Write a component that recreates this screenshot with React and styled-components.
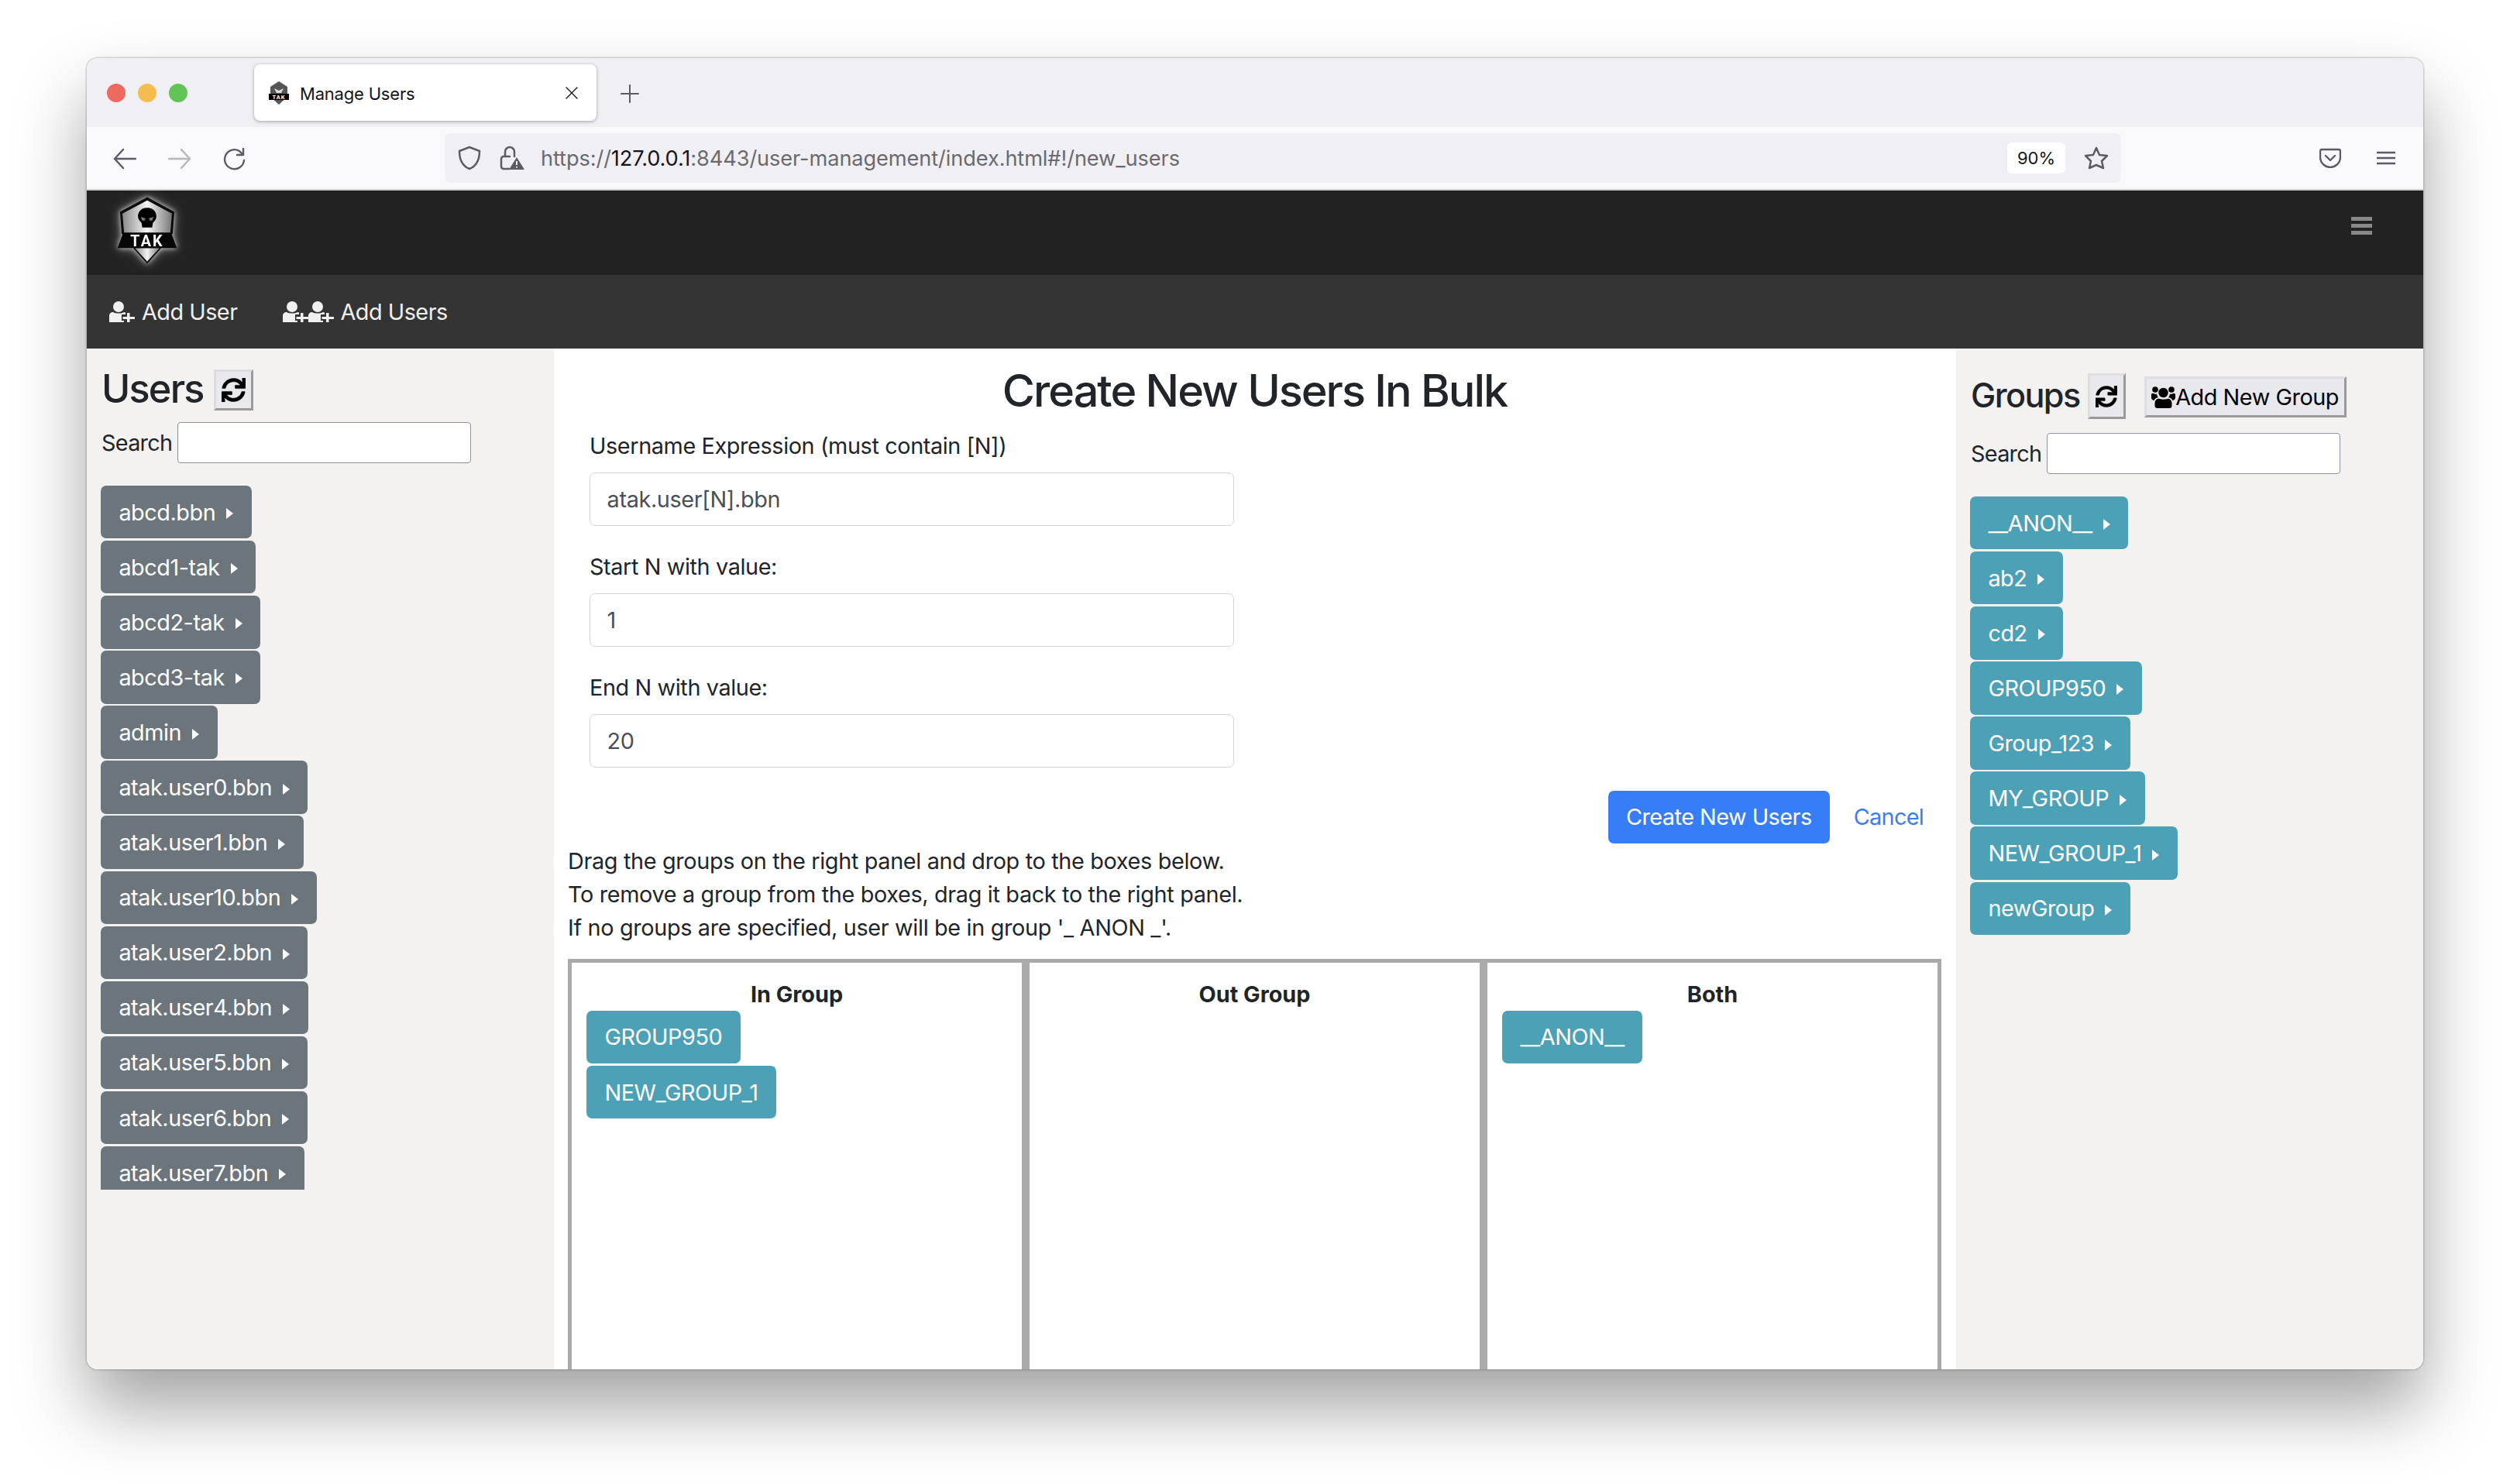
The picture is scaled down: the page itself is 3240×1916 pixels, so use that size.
import React from "react";
import styled, { createGlobalStyle } from "styled-components";
import { FaSync } from "react-icons/fa";

const users = [
	"abcd.bbn", "abcd1-tak", "abcd2-tak", "abcd3-tak", "admin", "atak.user0.bbn", "atak.user1.bbn",
	"atak.user10.bbn", "atak.user2.bbn", "atak.user4.bbn", "atak.user5.bbn", "atak.user6.bbn", "atak.user7.bbn",
];
const groups = ["__ANON__", "ab2", "cd2", "GROUP950", "Group_123", "MY_GROUP", "NEW_GROUP_1", "newGroup"];
const fontStack = `Inter, "Liberation Sans", sans-serif`;

const GlobalStyle = createGlobalStyle`
  html, body { margin: 0; padding: 0; background: #fff; }
  body { width: 3240px; height: 1916px; overflow: hidden; font-family: ${fontStack}; color: #212529; }
  * { box-sizing: border-box; }
`;

const Page = styled.div`
  padding: 75px 112px 0;
  height: 1916px;
  overflow: hidden;
  background: #fff;
`;
const Window = styled.div`
  height: 1693px;
  border-radius: 14px;
  overflow: hidden;
  display: flex;
  flex-direction: column;
  background: #f3f2f1;
  box-shadow: 0 50px 90px rgba(0, 0, 0, 0.36), 0 0 3px rgba(0, 0, 0, 0.45);
`;
const TabStrip = styled.div`
  height: 89px;
  flex: none;
  background: #f0f0f4;
  display: flex;
  align-items: flex-start;
  padding-left: 26px;
`;
const Lights = styled.div`
  display: flex;
  gap: 16px;
  margin-top: 33px;
  width: 190px;
`;
const Light = styled.span`
  width: 24px;
  height: 24px;
  border-radius: 50%;
  background: ${(p) => p.$color};
`;
const Tab = styled.div`
  width: 442px;
  height: 73px;
  margin-top: 8px;
  background: #fff;
  border-radius: 8px;
  box-shadow: 0 1px 4px rgba(0, 0, 0, 0.35);
  display: flex;
  align-items: center;
  padding: 0 24px 0 18px;
`;
const TabTitle = styled.span`
  flex: 1;
  font-size: 22px;
  margin: 2px 0 0 13px;
  color: #15141a;
  letter-spacing: -0.2px;
`;
const NewTab = styled.div`
  margin: 34px 0 0 31px;
  line-height: 0;
`;
const Toolbar = styled.div`
  height: 82px;
  flex: none;
  background: #f9f9fb;
  border-bottom: 2px solid #cfcfd0;
  display: flex;
  align-items: center;
  padding: 0 36px 0 34px;
`;
const NavButtons = styled.div`
  display: flex;
  align-items: center;
  gap: 41px;
  width: 428px;
  margin-top: 2px;
  line-height: 0;
`;
const UrlBar = styled.div`
  width: 2164px;
  height: 64px;
  background: #f0f0f4;
  border-radius: 8px;
  display: flex;
  align-items: center;
  padding: 0 16px;
  line-height: 0;
`;
const LockIcon = styled.svg`
  width: 32px;
  height: 32px;
  margin-left: 23px;
`;
const UrlText = styled.div`
  flex: 1;
  margin: 2px 0 0 21px;
  font-size: 27.2px;
  line-height: 32px;
  color: #6a6a70;
  letter-spacing: -0.1px;
  b { font-weight: 400; color: #15141a; }
`;
const ZoomBadge = styled.div`
  width: 75px;
  height: 40px;
  background: #fff;
  border-radius: 6px;
  font-size: 22px;
  line-height: 40px;
  text-align: center;
  color: #15141a;
  margin-right: 24px;
`;
const ToolbarEnd = styled.div`
  margin-left: auto;
  display: flex;
  align-items: center;
  gap: 46px;
  line-height: 0;
`;
const Navbar = styled.div`
  height: 109px;
  flex: none;
  background: #222;
  display: flex;
  align-items: flex-start;
  justify-content: space-between;
  padding: 4px 66px 0 28px;
`;
const Logo = styled.svg`
  width: 100px;
  height: 95px;
  filter: drop-shadow(0 0 3px rgba(255, 255, 255, 0.7)) drop-shadow(0 0 7px rgba(255, 255, 255, 0.4));
`;
const Toggler = styled.div`
  display: flex;
  flex-direction: column;
  gap: 4px;
  margin-top: 30px;
`;
const TogglerBar = styled.span`
  width: 27px;
  height: 5px;
  background: #888;
`;
const SubNav = styled.div`
  height: 95px;
  flex: none;
  background: #343434;
  display: flex;
  align-items: center;
  gap: 58px;
  padding-left: 29px;
`;
const SubNavLink = styled.a`
  display: flex;
  align-items: center;
  gap: 9px;
  font-size: 28.8px;
  letter-spacing: -0.5px;
  color: #f0f0f0;
`;
const IconPair = styled.span`
  display: flex;
  line-height: 0;
`;
const Content = styled.div`
  flex: 1;
  min-height: 0;
  display: grid;
  grid-template-columns: 603px 1810px 603px;
`;
const SidePanel = styled.div`
  background: #f3f2f1;
  padding: ${(p) => p.$top}px 0 0 18px;
  overflow: hidden;
`;
const PanelHead = styled.div`
  display: flex;
  align-items: ${(p) => (p.$wide ? "flex-start" : "center")};
  padding-left: 1px;
`;
const UsersTitle = styled.h3`
  margin: 0 13px 0 0;
  padding-bottom: 3px;
  font-size: 50.4px;
  line-height: 50px;
  font-weight: 500;
  letter-spacing: -1.8px;
`;
const GroupsTitle = styled.h4`
  margin: 2px 10px 0 0;
  font-size: 43.2px;
  line-height: 52px;
  font-weight: 500;
  letter-spacing: -1.6px;
`;
const OutsetButton = styled.button`
  width: ${(p) => p.$w}px;
  height: ${(p) => p.$h}px;
  margin: ${(p) => p.$margin || 0};
  padding: 0;
  display: flex;
  align-items: center;
  justify-content: center;
  background: #e9e9ed;
  border-style: solid;
  border-width: 3px;
  border-color: #dedee2 #9a9a9a #9a9a9a #dedee2;
  font-family: ${fontStack};
  font-size: 28.8px;
  letter-spacing: -0.45px;
  color: #000;
  svg { flex: none; }
`;
const SearchRow = styled.div`
  display: flex;
  align-items: center;
  gap: 7px;
  margin-top: ${(p) => p.$gap}px;
  padding-left: 1px;
  font-size: 28.8px;
  letter-spacing: -0.7px;
`;
const SearchInput = styled.input`
  width: 379px;
  height: 53px;
  border: 1.5px solid #8f8f9d;
  border-radius: 4px;
  background: #fff;
`;
const ChipList = styled.div`
  margin-top: 29px;
  height: ${(p) => p.$h}px;
  overflow: hidden;
  display: flex;
  flex-direction: column;
  align-items: flex-start;
  gap: 2.7px;
`;
const Chip = styled.div`
  flex: none;
  display: inline-flex;
  align-items: center;
  height: 68.4px;
  padding: 0 23.4px;
  border-radius: 7.2px;
  background: ${(p) => (p.$tone === "info" ? "#4ca1b7" : "#6c747c")};
  color: #fff;
  font-size: 28.8px;
  letter-spacing: -0.45px;
  white-space: nowrap;
`;
const Caret = styled.span`
  width: 0;
  height: 0;
  margin: 4px 0 0 14px;
  border-left: 9px solid #fff;
  border-top: 7.5px solid transparent;
  border-bottom: 7.5px solid transparent;
`;
const CenterPane = styled.div`
  background: #fff;
  padding: 21px 19px 0 18px;
  overflow: hidden;
`;
const Title = styled.h2`
  margin: 0 0 17px;
  text-align: center;
  font-size: 57.6px;
  line-height: 66px;
  font-weight: 500;
  letter-spacing: -2px;
`;
const Form = styled.div`
  width: 832px;
  margin-left: 28px;
`;
const Field = styled.div`
  margin-bottom: 31.4px;
  &:last-child { margin-bottom: 30px; }
`;
const Label = styled.label`
  display: block;
  font-size: 28.8px;
  line-height: 43.2px;
  letter-spacing: -0.38px;
  margin-bottom: 13px;
`;
const TextInput = styled.input`
  display: block;
  width: 100%;
  height: 68.4px;
  padding: 0 21.6px;
  border: 1.8px solid #ced4da;
  border-radius: 7.2px;
  font-family: ${fontStack};
  font-size: 28.8px;
  letter-spacing: -0.35px;
  color: #495057;
  background: #fff;
`;
const Actions = styled.div`
  display: flex;
  justify-content: flex-end;
  align-items: center;
  gap: 31px;
  padding-right: 23px;
  font-size: 28.8px;
`;
const PrimaryButton = styled.button`
  height: 68.4px;
  width: 286px;
  padding: 0;
  border: none;
  border-radius: 7.2px;
  background: #377df7;
  color: #fff;
  font-family: ${fontStack};
  font-size: 28.8px;
  letter-spacing: -0.5px;
`;
const CancelLink = styled.a`
  color: #377df7;
  letter-spacing: -0.7px;
`;
const Help = styled.p`
  margin: 1px 0 18px;
  font-size: 28.8px;
  line-height: 43.2px;
  letter-spacing: -0.33px;
`;
const Boxes = styled.div`
  display: grid;
  grid-template-columns: repeat(3, 591px);
`;
const DropBox = styled.div`
  height: 1000px;
  border: 5.4px solid #aaa;
  padding: 19px 19px 0;
`;
const BoxTitle = styled.div`
  font-size: 28.8px;
  line-height: 43.2px;
  font-weight: 700;
  text-align: center;
`;
const BoxChips = styled.div`
  display: flex;
  flex-direction: column;
  align-items: flex-start;
  gap: 2.7px;
`;

const Stroke = ({ w, h, box, d, color = "#5b5b66", sw = 2.4 }) => (
	<svg width={w} height={h} viewBox={box} fill="none" stroke={color} strokeWidth={sw} strokeLinecap="round" strokeLinejoin="round">
		<path d={d} />
	</svg>
);

const TakLogo = () => (
	<Logo viewBox="3 2 94 89">
		<defs>
			<linearGradient id="steel" x1="0" x2="1" y1="0" y2="0">
				<stop offset="0" stopColor="#8a8a8a" />
				<stop offset="0.5" stopColor="#f4f4f4" />
				<stop offset="1" stopColor="#777" />
			</linearGradient>
		</defs>
		<path d="M50 6 L83 24 L81 50 L66 69 L50 87 L34 69 L19 50 L17 24 Z" fill="#0c0c0c" />
		<path d="M50 10 L80 26 L78 50 L22 50 L20 26 Z" fill="url(#steel)" />
		<path d="M35 68 L65 68 L50 84 Z" fill="url(#steel)" />
		<path d="M50 19 C58 19 62 25 61 31 C60.500 34 58 36 57 37 L56 43 L44 43 L43 37 C42 36 39.500 34 39 31 C38 25 42 19 50 19 Z" fill="#000" />
		<path d="M42.500 30 L48 32 L46.500 35 L43.500 34 Z M57.500 30 L52 32 L53.500 35 L56.500 34 Z" fill="#777" />
		<path d="M21 49 L79 49 L86 68 L14 68 Z" fill="#060606" />
		<text x="50" y="66" textAnchor="middle" fontFamily="Roboto, sans-serif" fontWeight="700" fontSize="18.500" letterSpacing="2" fill="#fff">TAK</text>
	</Logo>
);

const TabIcon = () => (
	<svg width="28" height="32" viewBox="0 0 28 32">
		<path d="M14 1 L25 8 L25 21 L14 31 L3 21 L3 8 Z" fill="#555" />
		<path d="M8 10 L14 13 L20 10 L17 16 L11 16 Z" fill="#ddd" />
		<rect x="1" y="17" width="26" height="8" fill="#000" />
		<text x="14" y="24" textAnchor="middle" fontFamily="Roboto, sans-serif" fontWeight="700" fontSize="7.500" letterSpacing="1" fill="#fff">TAK</text>
	</svg>
);

// font awesome 4 style user-plus, the one in react-icons is wider
const UserPlus = () => (
	<svg width="33" height="27" viewBox="0 0 33 27" fill="#f0f0f0">
		<ellipse cx="12" cy="7" rx="7" ry="7" />
		<path d="M0 27 V19 C0 16 2 14 5 14 C8 16 16 16 19 14 C20 14 20.500 14.200 21 14.500 V17 H16 V25 H19 V27 Z" />
		<path d="M23 15 H26.500 V20 H33 V23 H26.500 V27 H23 V23 H17.500 V20 H23 Z" />
	</svg>
);

const GroupIcon = () => (
	<svg width="31" height="29" viewBox="0 0 31 29" fill="#000">
		<circle cx="5" cy="5" r="3.800" />
		<circle cx="26" cy="5" r="3.800" />
		<circle cx="15.500" cy="9" r="6.200" />
		<path d="M0 11 C1 9.500 2.500 9.500 4 10.500 C5 11 6 11 7 10.500 C7.300 12.500 8 14 9 15 C6 15.500 4.500 17 3.500 19 C1 18.500 0 17 0 15 Z" />
		<path d="M31 11 C30 9.500 28.500 9.500 27 10.500 C26 11 25 11 24 10.500 C23.700 12.500 23 14 22 15 C25 15.500 26.500 17 27.500 19 C30 18.500 31 17 31 15 Z" />
		<path d="M9.500 16.500 C12 18 19 18 21.500 16.500 C24.500 17 26.500 19 26.500 22.500 V26 C26.500 28 25 29 23.500 29 H7.500 C6 29 4.500 28 4.500 26 V22.500 C4.500 19 6.500 17 9.500 16.500 Z" />
	</svg>
);

const Pill = ({ tone, caret = true, children }) => (
	<Chip $tone={tone}>
		{children}
		{caret && <Caret />}
	</Chip>
);

export default function App() {
	return (
		<>
			<GlobalStyle />
			<Page>
				<Window>
					<TabStrip>
						<Lights>
							<Light $color="#ee6a5f" />
							<Light $color="#f5bd4f" />
							<Light $color="#61c454" />
						</Lights>
						<Tab>
							<TabIcon />
							<TabTitle>Manage Users</TabTitle>
							<Stroke w={16} h={16} box="0 0 16 16" d="M1 1 L15 15 M15 1 L1 15" color="#15141a" sw={1.4} />
						</Tab>
						<NewTab>
							<Stroke w={24} h={24} box="0 0 24 24" d="M12 1 V23 M1 12 H23" sw={2} />
						</NewTab>
					</TabStrip>
					<Toolbar>
						<NavButtons>
							<Stroke w={30} h={28} box="0 0 30 28" d="M29 14 H2 M13 2 L2 14 L13 26" />
							<Stroke w={30} h={28} box="0 0 30 28" d="M1 14 H28 M17 2 L28 14 L17 26" color="#b6b6bb" />
							<Stroke w={30} h={30} box="0 0 30 30" d="M27 17 A12.500 12.500 0 1 1 21 5 L26 10 M26 2 V10 H18" />
						</NavButtons>
						<UrlBar>
							<Stroke w={32} h={32} box="0 0 32 32" d="M16 2 L29 7 C29 18 26 26 16 30 C6 26 3 18 3 7 Z" sw={2.5} />
							<LockIcon viewBox="0 0 32 32">
								<path d="M7 14 V8 A6 6 0 0 1 19 8 V14 M13 14 H5 A3 3 0 0 0 2 17 V27 A3 3 0 0 0 5 30 H12" fill="none" stroke="#5b5b66" strokeWidth="2.500" strokeLinecap="round" />
								<path d="M22 15 L32 31 H12 Z" fill="#5b5b66" />
								<path d="M22 20 V25 M22 27 V28.500" stroke="#f0f0f4" strokeWidth="2" />
							</LockIcon>
							<UrlText>
								https://<b>127.0.0.1</b>:8443/user-management/index.html#!/new_users
							</UrlText>
							<ZoomBadge>90%</ZoomBadge>
							<Stroke w={32} h={30} box="0 0 32 30" d="M16 2 L20 11 L30 12 L23 19 L25 28 L16 24 L7 28 L9 19 L2 12 L12 11 Z" sw={2.5} />
						</UrlBar>
						<ToolbarEnd>
							<Stroke w={28} h={26} box="0 0 28 26" d="M3 2 H25 A2 2 0 0 1 27 4 V12 C27 20 20 25 14 25 C8 25 1 20 1 12 V4 A2 2 0 0 1 3 2 Z M8 10 L14 16 L20 10" sw={2.4} />
							<Stroke w={24} h={18} box="0 0 24 18" d="M0 2 H24 M0 9 H24 M0 16 H24" sw={2.4} />
						</ToolbarEnd>
					</Toolbar>
					<Navbar>
						<TakLogo />
						<Toggler>
							<TogglerBar />
							<TogglerBar />
							<TogglerBar />
						</Toggler>
					</Navbar>
					<SubNav>
						<SubNavLink>
							<UserPlus />
							Add User
						</SubNavLink>
						<SubNavLink>
							<IconPair>
								<UserPlus />
								<UserPlus />
							</IconPair>
							Add Users
						</SubNavLink>
					</SubNav>
					<Content>
						<SidePanel $top={27}>
							<PanelHead>
								<UsersTitle>Users</UsersTitle>
								<OutsetButton $w={51} $h={53}>
									<FaSync size={31} stroke="currentColor" strokeWidth={8} />
								</OutsetButton>
							</PanelHead>
							<SearchRow $gap={15}>
								Search
								<SearchInput />
							</SearchRow>
							<ChipList $h={909}>
								{users.map((name) => (
									<Pill key={name}>{name}</Pill>
								))}
							</ChipList>
						</SidePanel>
						<CenterPane>
							<Title>Create New Users In Bulk</Title>
							<Form>
								<Field>
									<Label>Username Expression (must contain [N])</Label>
									<TextInput defaultValue="atak.user[N].bbn" />
								</Field>
								<Field>
									<Label>Start N with value:</Label>
									<TextInput defaultValue="1" />
								</Field>
								<Field>
									<Label>End N with value:</Label>
									<TextInput defaultValue="20" />
								</Field>
							</Form>
							<Actions>
								<PrimaryButton>Create New Users</PrimaryButton>
								<CancelLink>Cancel</CancelLink>
							</Actions>
							<Help>
								Drag the groups on the right panel and drop to the boxes below.
								<br />
								To remove a group from the boxes, drag it back to the right panel.
								<br />
								If no groups are specified, user will be in group '_ ANON _'.
							</Help>
							<Boxes>
								<DropBox>
									<BoxTitle>In Group</BoxTitle>
									<BoxChips>
										<Pill tone="info" caret={false}>GROUP950</Pill>
										<Pill tone="info" caret={false}>NEW_GROUP_1</Pill>
									</BoxChips>
								</DropBox>
								<DropBox>
									<BoxTitle>Out Group</BoxTitle>
								</DropBox>
								<DropBox>
									<BoxTitle>Both</BoxTitle>
									<BoxChips>
										<Pill tone="info" caret={false}>__ANON__</Pill>
									</BoxChips>
								</DropBox>
							</Boxes>
						</CenterPane>
						<SidePanel $top={32}>
							<PanelHead $wide>
								<GroupsTitle>Groups</GroupsTitle>
								<OutsetButton $w={49} $h={59}>
									<FaSync size={28} stroke="currentColor" strokeWidth={8} />
								</OutsetButton>
								<OutsetButton $w={261} $h={53} $margin="4px 0 0 24px">
									<GroupIcon />
									Add New Group
								</OutsetButton>
							</PanelHead>
							<SearchRow $gap={18}>
								Search
								<SearchInput />
							</SearchRow>
							<ChipList $h={640}>
								{groups.map((name) => (
									<Pill key={name} tone="info">{name}</Pill>
								))}
							</ChipList>
						</SidePanel>
					</Content>
				</Window>
			</Page>
		</>
	);
}
